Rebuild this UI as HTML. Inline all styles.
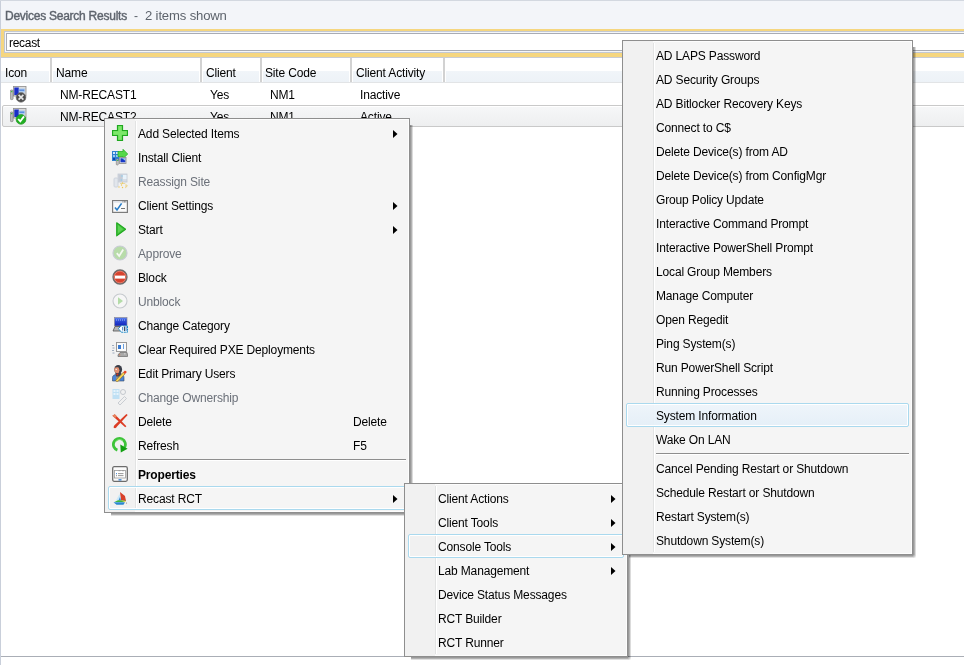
<!DOCTYPE html>
<html><head><meta charset="utf-8"><style>
*{margin:0;padding:0;box-sizing:border-box}
html,body{width:964px;height:665px;overflow:hidden;background:#fff;position:relative;font-family:"Liberation Sans", sans-serif}
div,svg{position:absolute}
.t{white-space:nowrap;line-height:16px;height:16px;will-change:transform;letter-spacing:-0.15px}
.menu{background:#f5f5f5;border:1px solid #8e8e8e}
.inw{border:1px solid #fdfdfd}
.shr{background:linear-gradient(to right,rgba(0,0,0,.40) 0 1px,rgba(0,0,0,.30) 1px 2px,rgba(0,0,0,.14) 2px 3px)}
.shb{background:linear-gradient(to bottom,rgba(0,0,0,.40) 0 1px,rgba(0,0,0,.30) 1px 2px,rgba(0,0,0,.12) 2px 3px)}
.shc{background:radial-gradient(circle at 0 0,rgba(0,0,0,.38) 0,rgba(0,0,0,.25) 1.5px,rgba(0,0,0,.08) 3px,transparent 4px)}
.gut{background:#f1f1f1}
.gsep{width:2px;border-left:1px solid #e2e3e3;border-right:1px solid #fff}
.hsep{height:2px;border-top:1px solid #8e8e8e;border-bottom:1px solid #fff}
.hl{border:1px solid #aad9ee;border-radius:2px;background:linear-gradient(rgba(238,245,251,0.92),rgba(228,239,248,0.92));box-shadow:inset 0 0 0 1px #fff}
.hlo{border:1px solid #aad9ee;border-radius:2px;box-shadow:inset 0 0 0 1px #fff}
.ic{width:18px;height:18px}
.ic svg{position:static;display:block}
</style></head>
<body>
<div style="left:0;top:0;width:964px;height:1px;background:#d3d8e0"></div>
<div style="left:0;top:1px;width:1px;height:664px;background:#c9cfda"></div>
<div style="left:1px;top:1px;width:963px;height:28px;background:#f3f5f9"></div>
<div class="t" style="left:5px;top:8px;color:#5e646d;font-size:12px;letter-spacing:-0.25px;-webkit-text-stroke:0.4px #5e646d">Devices Search Results</div>
<div class="t" style="left:134px;top:8px;color:#5d636c;font-size:12px;">-</div>
<div class="t" style="left:145px;top:8px;color:#5d636c;font-size:13.1px;">2 items shown</div>
<div style="left:1px;top:29px;width:963px;height:28px;background:#f5d680"></div>
<div style="left:4px;top:31px;width:960px;height:22px;background:#c3c8d2"></div>
<div style="left:5px;top:32px;width:959px;height:20px;background:#f4f6f9"></div>
<div style="left:6px;top:33px;width:958px;height:18px;background:#a9acb3"></div>
<div style="left:7px;top:34px;width:957px;height:16px;background:#fff"></div>
<div class="t" style="left:9px;top:35px;color:#000;font-size:12px;letter-spacing:-0.3px">recast</div>
<div style="left:1px;top:57px;width:963px;height:1px;background:#c8ccd4"></div>
<div style="left:1px;top:71px;width:963px;height:11px;background:linear-gradient(#f1f5f9,#edf2f7)"></div>
<div style="left:1px;top:82px;width:963px;height:1px;background:#e2e4e6"></div>
<div style="left:49px;top:58px;width:4px;height:24px;background:#fff"></div>
<div style="left:50px;top:58px;width:2px;height:24px;background:#d2d2d2"></div>
<div style="left:199px;top:58px;width:4px;height:24px;background:#fff"></div>
<div style="left:200px;top:58px;width:2px;height:24px;background:#d2d2d2"></div>
<div style="left:259px;top:58px;width:4px;height:24px;background:#fff"></div>
<div style="left:260px;top:58px;width:2px;height:24px;background:#d2d2d2"></div>
<div style="left:349px;top:58px;width:4px;height:24px;background:#fff"></div>
<div style="left:350px;top:58px;width:2px;height:24px;background:#d2d2d2"></div>
<div style="left:442px;top:58px;width:4px;height:24px;background:#fff"></div>
<div style="left:443px;top:58px;width:2px;height:24px;background:#d2d2d2"></div>
<div class="t" style="left:5px;top:65px;color:#000;font-size:12px;">Icon</div>
<div class="t" style="left:56px;top:65px;color:#000;font-size:12px;">Name</div>
<div class="t" style="left:206px;top:65px;color:#000;font-size:12px;">Client</div>
<div class="t" style="left:265px;top:65px;color:#000;font-size:12px;">Site Code</div>
<div class="t" style="left:356px;top:65px;color:#000;font-size:12px;">Client Activity</div>
<div style="left:2px;top:105px;width:966px;height:22px;border:1px solid #c9c9c9;border-radius:2px;background:linear-gradient(#f6f7f8,#eeeff0);box-shadow:inset 0 1px 0 #fff"></div>
<div class="ic" style="left:10px;top:86px"><svg width="17" height="17" viewBox="0 0 17 17"><rect x="3.5" y="0.5" width="12.5" height="9.5" fill="#dcdcdc" stroke="#8c8c8c" stroke-width="0.8"/><rect x="4.3" y="1.5" width="4.5" height="7.5" fill="#1a2ec8"/><rect x="8.8" y="2.5" width="6" height="4" fill="#a8c8f0"/><rect x="9.3" y="3.5" width="5" height="1.5" fill="#5c8ee0"/><rect x="0.3" y="4" width="2.8" height="9.6" rx="1" fill="#bcbcbc" stroke="#707070" stroke-width="0.6"/><rect x="1.1" y="5" width="1.2" height="1.2" fill="#30c030"/><circle cx="11" cy="11.4" r="4.9" fill="#4e4e4e" stroke="#777" stroke-width="0.6"/><path d="M8.6 8.8L13.4 13.6M13.4 8.8L8.6 13.6" stroke="#e4e4e4" stroke-width="1.7"/></svg></div>
<div class="ic" style="left:10px;top:108px"><svg width="17" height="17" viewBox="0 0 17 17"><rect x="3.5" y="0.5" width="12.5" height="9.5" fill="#dcdcdc" stroke="#8c8c8c" stroke-width="0.8"/><rect x="4.3" y="1.5" width="4.5" height="7.5" fill="#1a2ec8"/><rect x="8.8" y="2.5" width="6" height="4" fill="#a8c8f0"/><rect x="9.3" y="3.5" width="5" height="1.5" fill="#5c8ee0"/><rect x="0.3" y="4" width="2.8" height="9.6" rx="1" fill="#bcbcbc" stroke="#707070" stroke-width="0.6"/><rect x="1.1" y="5" width="1.2" height="1.2" fill="#30c030"/><circle cx="11" cy="11.4" r="4.9" fill="#22b022" stroke="#1a8a1a" stroke-width="0.6"/><path d="M8.2 11L10.3 13.4L14 8.4" fill="none" stroke="#fff" stroke-width="1.8"/></svg></div>
<div class="t" style="left:60px;top:87px;color:#000;font-size:12px;">NM-RECAST1</div>
<div class="t" style="left:210px;top:87px;color:#000;font-size:12px;">Yes</div>
<div class="t" style="left:270px;top:87px;color:#000;font-size:12px;">NM1</div>
<div class="t" style="left:360px;top:87px;color:#000;font-size:12px;">Inactive</div>
<div class="t" style="left:60px;top:109px;color:#000;font-size:12px;">NM-RECAST2</div>
<div class="t" style="left:210px;top:109px;color:#000;font-size:12px;">Yes</div>
<div class="t" style="left:270px;top:109px;color:#000;font-size:12px;">NM1</div>
<div class="t" style="left:360px;top:109px;color:#000;font-size:12px;">Active</div>
<div style="left:1px;top:656px;width:963px;height:1px;background:#aaaeb6"></div>
<div class="shr" style="left:410px;top:125px;width:3px;height:388px"></div>
<div class="shb" style="left:111px;top:513px;width:299px;height:3px"></div>
<div class="shc" style="left:410px;top:513px;width:3px;height:3px"></div>
<div class="menu" style="left:104px;top:118px;width:306px;height:395px">
<div class="inw" style="left:0;top:0;width:304px;height:393px"></div>
<div class="gut" style="left:0;top:0;width:30px;height:393px"></div>
<div class="gsep" style="left:30px;top:2px;height:389px"></div>
<div class="ic" style="left:7px;top:6px"><svg width="16" height="16" viewBox="0 0 16 16"><path d="M5.5 0.5h5v5h5v5h-5v5h-5v-5h-5v-5h5z" fill="#6ddc5a" stroke="#1fa81f" stroke-width="1.2"/><path d="M6.5 1.5h3v5h5v3h-5v5h-3v-5h-5v-3h5z" fill="#7de86a"/></svg></div>
<div class="t" style="left:33px;top:7px;color:#000;font-size:12px;">Add Selected Items</div>
<svg class="a" style="left:288px;top:11px" width="5" height="8" viewBox="0 0 5 8"><path d="M0 0L4.5 4L0 8Z" fill="#000"/></svg>
<div class="ic" style="left:7px;top:30px"><svg width="16" height="17" viewBox="0 0 16 17"><rect x="0" y="2" width="7" height="10" fill="#2f80d0"/><rect x="1" y="3" width="2" height="2" fill="#cfe6ff"/><rect x="4" y="3" width="2" height="2" fill="#cfe6ff"/><rect x="1" y="6" width="2" height="2" fill="#9cc8f0"/><rect x="4" y="6" width="2" height="2" fill="#9cc8f0"/><rect x="1" y="9" width="2" height="2" fill="#1040b0"/><path d="M6 2.5H11V0.3L15.7 5L11 9.7V7.5H6Z" fill="#55d84a" stroke="#2aae2a" stroke-width="0.8"/><rect x="7.5" y="8.5" width="6.5" height="6" fill="#e0e0e0" stroke="#8a8a8a" stroke-width="0.8"/><rect x="8.5" y="9.3" width="4.8" height="4" fill="#1638c8"/><path d="M10 9.3h3.3v2.5z" fill="#9fd0f0"/><rect x="4.3" y="10" width="2" height="6" rx="0.8" fill="#c8c8c8" stroke="#7a7a7a" stroke-width="0.6"/><rect x="4.9" y="11" width="0.9" height="1" fill="#30c030"/></svg></div>
<div class="t" style="left:33px;top:31px;color:#000;font-size:12px;">Install Client</div>
<div class="ic" style="left:7px;top:52px"><svg width="16" height="18" viewBox="0 0 16 18"><rect x="6" y="3" width="9" height="8" fill="#d8dde6" stroke="#c4cad4" stroke-width="0.8"/><rect x="6.5" y="3.5" width="4" height="7" fill="#c6ccd6"/><rect x="11" y="4" width="3.5" height="4" fill="#e8f3fb"/><circle cx="10" cy="5" r="0.8" fill="#90d0f0"/><circle cx="9.5" cy="9" r="0.8" fill="#90d0f0"/><rect x="2" y="7" width="4" height="9" rx="1" fill="#e2e6ec" stroke="#c8ced8" stroke-width="0.8"/><path d="M8 12.5h5l2.5 2.5l-2.5 2" fill="none" stroke="#e8d8a0" stroke-width="1"/><circle cx="10.5" cy="12" r="0.7" fill="#f0c850"/><circle cx="9.5" cy="14" r="0.7" fill="#f0c850"/><circle cx="14" cy="15" r="0.7" fill="#f0c850"/><circle cx="7" cy="16" r="0.7" fill="#f0c850"/><circle cx="10.5" cy="16.5" r="0.7" fill="#f0c850"/></svg></div>
<div class="t" style="left:33px;top:55px;color:#6b7079;font-size:12px;">Reassign Site</div>
<div class="ic" style="left:7px;top:81px"><svg width="16" height="13" viewBox="0 0 16 13"><rect x="0.6" y="0.6" width="14.8" height="11.8" fill="#fafafa" stroke="#7c7c7c" stroke-width="1.2"/><rect x="1.2" y="1.3" width="13.6" height="1.4" fill="#dfe3ea"/><rect x="10.5" y="1.4" width="0.9" height="0.9" fill="#555"/><rect x="12" y="1.4" width="0.9" height="0.9" fill="#555"/><rect x="13.4" y="1.4" width="0.9" height="0.9" fill="#555"/><path d="M3 7.5L5 10L9.6 3.4" fill="none" stroke="#2a7ec8" stroke-width="1.6"/><rect x="9" y="8" width="4" height="0.9" fill="#666"/></svg></div>
<div class="t" style="left:33px;top:79px;color:#000;font-size:12px;">Client Settings</div>
<svg class="a" style="left:288px;top:83px" width="5" height="8" viewBox="0 0 5 8"><path d="M0 0L4.5 4L0 8Z" fill="#000"/></svg>
<div class="ic" style="left:11px;top:103px"><svg width="10" height="15" viewBox="0 0 10 15"><path d="M0.7 0.7L9.6 7.2L0.7 13.8Z" fill="#44c23c" stroke="#1ea81e" stroke-width="1.1" stroke-linejoin="round"/><path d="M2 3L7 7.2L2 11Z" fill="#5cd454"/></svg></div>
<div class="t" style="left:33px;top:103px;color:#000;font-size:12px;">Start</div>
<svg class="a" style="left:288px;top:107px" width="5" height="8" viewBox="0 0 5 8"><path d="M0 0L4.5 4L0 8Z" fill="#000"/></svg>
<div class="ic" style="left:7px;top:126px"><svg width="16" height="16" viewBox="0 0 16 16"><circle cx="8" cy="8" r="7" fill="#b8dcaa" stroke="#c8ccd4" stroke-width="1.2"/><path d="M4.8 8.2L7.2 11L11.2 4.6" fill="none" stroke="#f4f8f2" stroke-width="1.8"/></svg></div>
<div class="t" style="left:33px;top:127px;color:#6b7079;font-size:12px;">Approve</div>
<div class="ic" style="left:7px;top:150px"><svg width="16" height="16" viewBox="0 0 16 16"><circle cx="8" cy="8" r="7" fill="#d8432e" stroke="#6c6c6c" stroke-width="1.3"/><circle cx="8" cy="8" r="5.8" fill="none" stroke="#e6a090" stroke-width="0.6"/><rect x="3" y="6.6" width="10" height="3" fill="#fff"/></svg></div>
<div class="t" style="left:33px;top:151px;color:#000;font-size:12px;">Block</div>
<div class="ic" style="left:7px;top:174px"><svg width="16" height="16" viewBox="0 0 16 16"><circle cx="8" cy="8" r="7" fill="#f6f6f6" stroke="#c6cace" stroke-width="1.1"/><path d="M6 4.2L11 8L6 11.8Z" fill="#b4dca8"/></svg></div>
<div class="t" style="left:33px;top:175px;color:#6b7079;font-size:12px;">Unblock</div>
<div class="ic" style="left:7px;top:196px"><svg width="16" height="18" viewBox="0 0 16 18"><defs><linearGradient id="cg" x1="0" y1="0" x2="0" y2="1"><stop offset="0" stop-color="#6a90f0"/><stop offset="0.25" stop-color="#3458e0"/><stop offset="1" stop-color="#1020b8"/></linearGradient></defs><rect x="2.5" y="2.5" width="12.5" height="8.5" fill="url(#cg)" stroke="#8a8a9a" stroke-width="0.7"/><path d="M4 5h10" stroke="#b8c8f8" stroke-width="0.9" stroke-dasharray="1 1"/><path d="M1 16L3 11.5H10L9 16Z" fill="#b8b8b8" stroke="#505050" stroke-width="0.8"/><path d="M6.5 13.5L9.2 10.8H15.5V17.2H9.2Z" fill="#fff" stroke="#1a88c8" stroke-width="1" stroke-dasharray="2 0.6"/><rect x="10.3" y="12" width="0.9" height="3.5" fill="#1a6ab8"/><rect x="12" y="11.5" width="0.9" height="4.5" fill="#303a50"/><rect x="13.6" y="11.5" width="0.9" height="4.5" fill="#1a6ab8"/></svg></div>
<div class="t" style="left:33px;top:199px;color:#000;font-size:12px;">Change Category</div>
<div class="ic" style="left:7px;top:223px"><svg width="16" height="15" viewBox="0 0 16 15"><path d="M0 3.5h2M0.5 6h2M0 8.5h2M0.5 11h2" stroke="#8a9ab0" stroke-width="0.8"/><rect x="4.5" y="0.5" width="10" height="9" fill="#fafafa" stroke="#909090" stroke-width="0.9"/><rect x="6" y="3" width="3" height="4" fill="#3a7ad0"/><rect x="11" y="2" width="1" height="5" fill="#6aa0e0"/><path d="M6 13L8 10.5H15L15.5 13V14.5H6Z" fill="#a8a8a8" stroke="#6a6a6a" stroke-width="0.7"/><rect x="7" y="12.4" width="1.2" height="0.9" fill="#e07040"/><rect x="12" y="11.4" width="1.5" height="0.9" fill="#ddd"/></svg></div>
<div class="t" style="left:33px;top:223px;color:#000;font-size:12px;">Clear Required PXE Deployments</div>
<div class="ic" style="left:6px;top:245px"><svg width="16" height="18" viewBox="0 0 16 18"><path d="M1.5 17V13.5C1.5 11.8 3 10.8 5 10.6H9.5C11.6 10.8 13 11.8 13 13.5V17Z" fill="#4a84d8" stroke="#3a4a60" stroke-width="0.6"/><rect x="5" y="11" width="4" height="6" fill="#8a9098"/><ellipse cx="7.2" cy="5.6" rx="3.9" ry="4.6" fill="#3a3e48"/><path d="M3.4 4.2C4.5 3.2 6 3 7.6 3.6L8.6 6.5L7.5 9.5L4.2 8.8C3.4 7.5 3.2 5.6 3.4 4.2Z" fill="#e49070"/><circle cx="5.2" cy="5.4" r="0.7" fill="#f0f8ff"/><path d="M4.2 8.8L7.5 9.5L8.8 7L10.4 9.5L9 12.5H5.2Z" fill="#404450"/><circle cx="6.4" cy="10.4" r="0.9" fill="#e02818"/><path d="M4.5 16.5L12.2 8.3L14 10L6.3 18Z" fill="#f4d050" stroke="#6a5030" stroke-width="0.5"/><path d="M12.2 8.3L13.2 7.2C13.8 6.6 14.8 6.7 15.3 7.3C15.7 7.9 15.6 8.6 15 9.1L14 10Z" fill="#e84828"/></svg></div>
<div class="t" style="left:33px;top:247px;color:#000;font-size:12px;">Edit Primary Users</div>
<div class="ic" style="left:7px;top:269px"><svg width="16" height="18" viewBox="0 0 16 18"><rect x="0.5" y="1" width="7" height="10" fill="#bfe0f4"/><rect x="1.5" y="2" width="2" height="2" fill="#e6f3fb"/><rect x="4.5" y="2" width="2" height="2" fill="#e6f3fb"/><rect x="1.5" y="5" width="2" height="2" fill="#e6f3fb"/><rect x="4.5" y="5" width="2" height="2" fill="#e6f3fb"/><circle cx="11" cy="4" r="2.5" fill="none" stroke="#c4c8ce" stroke-width="1"/><path d="M6 15L12.5 8.5L14.5 10.5L8 17Z" fill="#f0f0f0" stroke="#c4c8ce" stroke-width="0.9"/></svg></div>
<div class="t" style="left:33px;top:271px;color:#6b7079;font-size:12px;">Change Ownership</div>
<div class="ic" style="left:7px;top:295px"><svg width="16" height="15" viewBox="0 0 16 15"><path d="M0.4 1.8L2.8 0.3L14.4 12.2L13.2 13.3Z" fill="#dc3c24"/><path d="M0.4 1.8L2.8 0.3L5 2.6L3 4Z" fill="#e6845e"/><path d="M14.4 0.1L15.7 1.1L4.8 12.8C4.2 14.4 2.4 14.6 1.6 13.4C1.6 12.4 2.2 11.6 3 10.8Z" fill="#dc3c24"/></svg></div>
<div class="t" style="left:33px;top:295px;color:#000;font-size:12px;">Delete</div>
<div class="t" style="left:248px;top:295px;color:#000;font-size:12px;">Delete</div>
<div class="ic" style="left:7px;top:318px"><svg width="16" height="16" viewBox="0 0 16 16"><path d="M5.4 13.1A6 6 0 1 1 12.6 10.4" fill="none" stroke="#3ec43a" stroke-width="2.8"/><path d="M3.5 5A4.6 4.6 0 0 1 11 4" fill="none" stroke="#7ee070" stroke-width="0.9"/><path d="M8.3 7.6L15.6 11.8L8.8 15.4Z" fill="#12a012"/></svg></div>
<div class="t" style="left:33px;top:319px;color:#000;font-size:12px;">Refresh</div>
<div class="t" style="left:248px;top:319px;color:#000;font-size:12px;">F5</div>
<div class="hsep" style="left:33px;top:340px;width:268px"></div>
<div class="ic" style="left:7px;top:347px"><svg width="16" height="16" viewBox="0 0 16 16"><rect x="0.7" y="0.7" width="14.6" height="14.6" rx="1.5" fill="#fbfbfb" stroke="#6c6c6c" stroke-width="1.3"/><rect x="2.5" y="4.5" width="11" height="7.5" fill="#fff" stroke="#9a9a9a" stroke-width="0.8"/><rect x="6.5" y="4.2" width="2" height="1" fill="#9a9a9a"/><rect x="10" y="4.2" width="2" height="1" fill="#9a9a9a"/><rect x="4" y="7.2" width="1" height="1" fill="#2a7ad0"/><rect x="6" y="7.2" width="5.5" height="0.9" fill="#8a8a8a"/><rect x="4" y="9.2" width="1" height="1" fill="#8a8a8a"/><rect x="6" y="9.2" width="5.5" height="0.9" fill="#8a8a8a"/><rect x="6.5" y="13.2" width="3" height="1.3" fill="#2a7ad0"/></svg></div>
<div class="t" style="left:33px;top:348px;color:#000;font-size:12px;font-weight:bold;">Properties</div>
<div class="hlo" style="left:3px;top:367px;width:298px;height:24px"></div>
<div class="ic" style="left:8px;top:372px"><svg width="16" height="15" viewBox="0 0 16 15"><path d="M7 1L12 5L13 10L8 9.5Z" fill="#d8402a"/><path d="M6.5 3L8 9L3 9.5Z" fill="#c8e8f8"/><path d="M7 6L8 9.5L5.5 9.5Z" fill="#3a8ad0"/><path d="M1.5 11L5 9.2L12.5 9.5L11.8 11Z" fill="#3cb83c"/><path d="M0.5 11.3H12L10.5 13.8H3.5Z" fill="#2a88d0"/><path d="M8 9.5L13 10L12 11.2Z" fill="#f0d060"/><circle cx="13.5" cy="12" r="0.6" fill="#808080"/></svg></div>
<div class="t" style="left:33px;top:372px;color:#000;font-size:12px;">Recast RCT</div>
<svg class="a" style="left:288px;top:376px" width="5" height="8" viewBox="0 0 5 8"><path d="M0 0L4.5 4L0 8Z" fill="#000"/></svg>
</div>
<div class="shr" style="left:628px;top:490px;width:3px;height:167px"></div>
<div class="shb" style="left:411px;top:657px;width:217px;height:3px"></div>
<div class="shc" style="left:628px;top:657px;width:3px;height:3px"></div>
<div class="menu" style="left:404px;top:483px;width:224px;height:174px">
<div class="inw" style="left:0;top:0;width:222px;height:172px"></div>
<div class="gut" style="left:0;top:0;width:30px;height:172px"></div>
<div class="gsep" style="left:30px;top:2px;height:168px"></div>
<div class="t" style="left:33px;top:7px;color:#000;font-size:12px;">Client Actions</div>
<svg class="a" style="left:206px;top:11px" width="5" height="8" viewBox="0 0 5 8"><path d="M0 0L4.5 4L0 8Z" fill="#000"/></svg>
<div class="t" style="left:33px;top:31px;color:#000;font-size:12px;">Client Tools</div>
<svg class="a" style="left:206px;top:35px" width="5" height="8" viewBox="0 0 5 8"><path d="M0 0L4.5 4L0 8Z" fill="#000"/></svg>
<div class="hlo" style="left:3px;top:50px;width:216px;height:24px"></div>
<div class="t" style="left:33px;top:55px;color:#000;font-size:12px;">Console Tools</div>
<svg class="a" style="left:206px;top:59px" width="5" height="8" viewBox="0 0 5 8"><path d="M0 0L4.5 4L0 8Z" fill="#000"/></svg>
<div class="t" style="left:33px;top:79px;color:#000;font-size:12px;">Lab Management</div>
<svg class="a" style="left:206px;top:83px" width="5" height="8" viewBox="0 0 5 8"><path d="M0 0L4.5 4L0 8Z" fill="#000"/></svg>
<div class="t" style="left:33px;top:103px;color:#000;font-size:12px;">Device Status Messages</div>
<div class="t" style="left:33px;top:127px;color:#000;font-size:12px;">RCT Builder</div>
<div class="t" style="left:33px;top:151px;color:#000;font-size:12px;">RCT Runner</div>
</div>
<div class="shr" style="left:913px;top:47px;width:3px;height:508px"></div>
<div class="shb" style="left:629px;top:555px;width:284px;height:3px"></div>
<div class="shc" style="left:913px;top:555px;width:3px;height:3px"></div>
<div class="menu" style="left:622px;top:40px;width:291px;height:515px">
<div class="inw" style="left:0;top:0;width:289px;height:513px"></div>
<div class="gut" style="left:0;top:0;width:30px;height:513px"></div>
<div class="gsep" style="left:30px;top:2px;height:509px"></div>
<div class="t" style="left:33px;top:7px;color:#000;font-size:12px;">AD LAPS Password</div>
<div class="t" style="left:33px;top:31px;color:#000;font-size:12px;">AD Security Groups</div>
<div class="t" style="left:33px;top:55px;color:#000;font-size:12px;">AD Bitlocker Recovery Keys</div>
<div class="t" style="left:33px;top:79px;color:#000;font-size:12px;">Connect to C$</div>
<div class="t" style="left:33px;top:103px;color:#000;font-size:12px;">Delete Device(s) from AD</div>
<div class="t" style="left:33px;top:127px;color:#000;font-size:12px;">Delete Device(s) from ConfigMgr</div>
<div class="t" style="left:33px;top:151px;color:#000;font-size:12px;">Group Policy Update</div>
<div class="t" style="left:33px;top:175px;color:#000;font-size:12px;">Interactive Command Prompt</div>
<div class="t" style="left:33px;top:199px;color:#000;font-size:12px;">Interactive PowerShell Prompt</div>
<div class="t" style="left:33px;top:223px;color:#000;font-size:12px;">Local Group Members</div>
<div class="t" style="left:33px;top:247px;color:#000;font-size:12px;">Manage Computer</div>
<div class="t" style="left:33px;top:271px;color:#000;font-size:12px;">Open Regedit</div>
<div class="t" style="left:33px;top:295px;color:#000;font-size:12px;">Ping System(s)</div>
<div class="t" style="left:33px;top:319px;color:#000;font-size:12px;">Run PowerShell Script</div>
<div class="t" style="left:33px;top:343px;color:#000;font-size:12px;">Running Processes</div>
<div class="hl" style="left:3px;top:362px;width:283px;height:24px"></div>
<div class="t" style="left:33px;top:367px;color:#000;font-size:12px;">System Information</div>
<div class="t" style="left:33px;top:391px;color:#000;font-size:12px;">Wake On LAN</div>
<div class="hsep" style="left:33px;top:412px;width:253px"></div>
<div class="t" style="left:33px;top:420px;color:#000;font-size:12px;">Cancel Pending Restart or Shutdown</div>
<div class="t" style="left:33px;top:444px;color:#000;font-size:12px;">Schedule Restart or Shutdown</div>
<div class="t" style="left:33px;top:468px;color:#000;font-size:12px;">Restart System(s)</div>
<div class="t" style="left:33px;top:492px;color:#000;font-size:12px;">Shutdown System(s)</div>
</div>
</body></html>
